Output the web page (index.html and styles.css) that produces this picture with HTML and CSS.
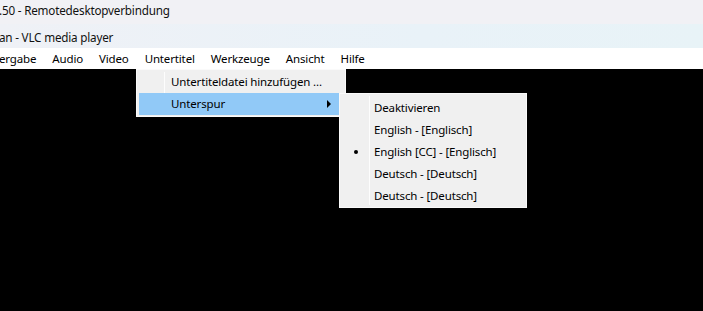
FILE: index.html
```html
<!DOCTYPE html>
<html lang="de">
<head>
<meta charset="utf-8">
<title>VLC media player</title>
<link rel="stylesheet" href="styles.css">
</head>
<body>
<div class="screen">
  <div class="rdp-title"><span class="title-text">.50 - Remotedesktopverbindung</span></div>
  <div class="vlc-title"><span class="title-text">an - VLC media player</span></div>
  <nav class="menubar">
    <span class="mitem first">ergabe</span>
    <span class="mitem">Audio</span>
    <span class="mitem">Video</span>
    <span class="mitem">Untertitel</span>
    <span class="mitem">Werkzeuge</span>
    <span class="mitem">Ansicht</span>
    <span class="mitem">Hilfe</span>
  </nav>
  <div class="video"></div>

  <div class="menu main-menu">
    <div class="gutter-line"></div>
    <div class="row">Untertiteldatei hinzufügen ...</div>
    <div class="row active">Unterspur<span class="arrow"></span></div>
  </div>

  <div class="menu sub-menu">
    <div class="gutter-line"></div>
    <div class="row">Deaktivieren</div>
    <div class="row">English - [Englisch]</div>
    <div class="row checked"><span class="bullet"></span>English [CC] - [Englisch]</div>
    <div class="row">Deutsch - [Deutsch]</div>
    <div class="row">Deutsch - [Deutsch]</div>
  </div>
</div>
</body>
</html>
```
FILE: styles.css
```css
html, body {
  margin: 0;
  padding: 0;
  background: #000;
}
.screen {
  position: relative;
  width: 703px;
  height: 311px;
  overflow: hidden;
  display: flex;
  flex-direction: column;
  font-family: "Noto Sans", "Open Sans", sans-serif;
  color: #000;
}
.rdp-title {
  height: 24px;
  background: #f1f1f5;
  display: flex;
  align-items: center;
}
.vlc-title {
  height: 24px;
  background: linear-gradient(90deg, #eff1f6 0%, #e9f2f8 60%, #e8f3f7 100%);
  display: flex;
  align-items: center;
}
.title-text {
  font-size: 11.7px;
  letter-spacing: -0.2px;
  margin-left: -1px;
  color: #111;
  padding-bottom: 4px;
}
.vlc-title .title-text {
  padding-bottom: 0;
  padding-top: 2px;
}
.menubar {
  height: 21px;
  background: #fff;
  display: flex;
  align-items: center;
  font-size: 11.5px;
  letter-spacing: -0.15px;
}
.mitem {
  padding: 0 8px;
}
.mitem.first {
  padding-left: 0;
  margin-left: -1px;
}
.video {
  flex: 1;
  background: #000;
}
.menu {
  position: absolute;
  background: #f0f0f0;
  border: 1px solid #fafafa;
  box-sizing: border-box;
  font-size: 11.5px;
  letter-spacing: -0.15px;
  padding: 2px;
}
.gutter-line {
  position: absolute;
  top: 2px;
  bottom: 2px;
  width: 1px;
  background: #fdfdfd;
}
.main-menu {
  left: 136px;
  top: 69px;
  width: 210px;
  height: 48px;
  padding: 1px 6px 2px 2px;
}
.main-menu .gutter-line {
  left: 27px;
}
.main-menu .row {
  padding-left: 32px;
}
.sub-menu {
  left: 339px;
  top: 93px;
  width: 188px;
  height: 115px;
  padding: 3px 3px 2px 2px;
}
.sub-menu .gutter-line {
  left: 29px;
}
.sub-menu .row {
  padding-left: 32px;
}
.row {
  position: relative;
  height: 22px;
  line-height: 22px;
  white-space: nowrap;
}
.row.active {
  background: #91c9f7;
}
.arrow {
  position: absolute;
  right: 8px;
  top: 7px;
  width: 0;
  height: 0;
  border-top: 4px solid transparent;
  border-bottom: 4px solid transparent;
  border-left: 4px solid #000;
}
.bullet {
  position: absolute;
  left: 12px;
  top: 9px;
  width: 4px;
  height: 4px;
  border-radius: 50%;
  background: #000;
}
```
